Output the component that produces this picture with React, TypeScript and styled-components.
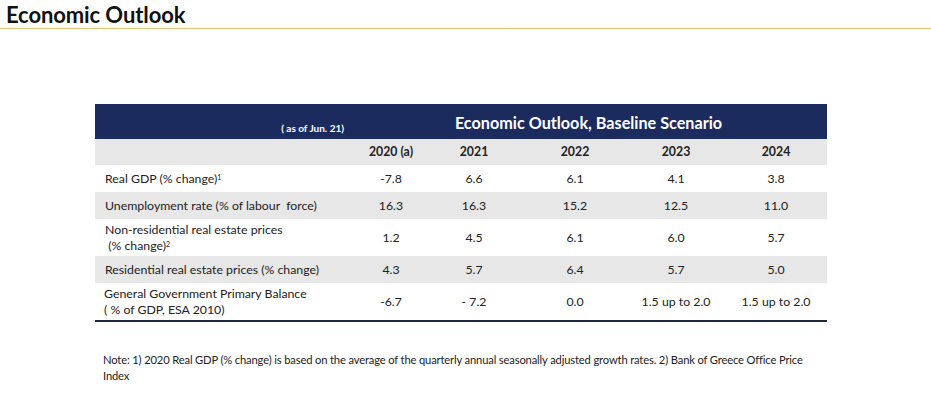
import React from "react";
import styled, { createGlobalStyle } from "styled-components";

const Global = createGlobalStyle`
  html, body { margin: 0; padding: 0; background: #ffffff; }
  body { font-family: Lato, "Open Sans", "Liberation Sans", sans-serif; color: #1f1f1f; }
`;

const Page = styled.div`
  width: 931px;
  height: 413px;
  overflow: hidden;
  background: #fff;
`;

const TitleBar = styled.header`
  height: 29px;
  border-bottom: 1.5px solid #e2c27c;
  box-sizing: border-box;
  padding: 3px 0 0 6px;
  background: linear-gradient(to bottom, #ffffff 80%, #fffbea 100%);
`;

const Title = styled.h1`
  margin: 0;
  font-size: 22px;
  font-weight: 700;
  line-height: 24px;
  color: #111;
  letter-spacing: -0.1px;
`;

const Content = styled.main`
  padding: 75px 0 0 95px;
`;

const COLS = "255px 82px 84px 118px 84px 109px";

const Table = styled.div`
  width: 732px;
  border-bottom: 2px solid #1d2940;
`;

const Band = styled.div`
  display: grid;
  grid-template-columns: 255px 1fr;
  height: 35px;
  background: #1b2b5e;
  color: #fff;
`;

const AsOf = styled.div`
  align-self: end;
  text-align: right;
  padding: 0 6px 5px 0;
  font-size: 10px;
  font-weight: 700;
`;

const BandTitle = styled.div`
  align-self: center;
  text-align: center;
  font-size: 16.2px;
  font-weight: 700;
  padding-top: 1px;
`;

const Row = styled.div<{ $shade?: boolean; $h: number }>`
  display: grid;
  grid-template-columns: ${COLS};
  align-items: center;
  height: ${(p) => p.$h}px;
  background: ${(p) => (p.$shade ? "#e7e7e8" : "#fff")};
  font-size: 12.3px;
  line-height: 15.5px;
  color: #222;
`;

const Label = styled.div<{ $indent?: number }>`
  padding-left: ${(p) => p.$indent ?? 10}px;
  white-space: pre;
`;

const Cell = styled.div<{ $shift?: number; $bold?: boolean }>`
  text-align: center;
  padding-left: ${(p) => p.$shift ?? 0}px;
  font-weight: ${(p) => (p.$bold ? 700 : 400)};
`;

const Sup = styled.sup`
  font-size: 7px;
  vertical-align: 3px;
  line-height: 0;
`;

const Note = styled.p`
  margin: 30px 0 0 8px;
  width: 718px;
  font-size: 11.2px;
  line-height: 16px;
  color: #222;
  letter-spacing: -0.15px;
`;

type R = { label: React.ReactNode; values: string[]; h: number; shade?: boolean; indent?: number };

const rows: R[] = [
  { label: <>Real GDP (% change)<Sup>1</Sup></>, values: ["-7.8", "6.6", "6.1", "4.1", "3.8"], h: 27 },
  { label: "Unemployment rate (% of labour  force)", values: ["16.3", "16.3", "15.2", "12.5", "11.0"], h: 27, shade: true },
  {
    label: <>Non-residential real estate prices<br /> (% change)<Sup>2</Sup></>,
    values: ["1.2", "4.5", "6.1", "6.0", "5.7"],
    h: 37,
  },
  { label: "Residential real estate prices (% change)", values: ["4.3", "5.7", "6.4", "5.7", "5.0"], h: 27, shade: true },
  {
    label: <>General Government Primary Balance<br />( % of GDP, ESA 2010)</>,
    values: ["-6.7", "- 7.2", "0.0", "1.5 up to 2.0", "1.5 up to 2.0"],
    h: 37,
    indent: 9,
  },
];

const years = ["2020 (a)", "2021", "2022", "2023", "2024"];

export default function App() {
  return (
    <Page>
      <Global />
      <TitleBar>
        <Title>Economic Outlook</Title>
      </TitleBar>
      <Content>
        <Table>
          <Band>
            <AsOf>( as of Jun. 21)</AsOf>
            <BandTitle>Economic Outlook, Baseline Scenario</BandTitle>
          </Band>
          <Row $shade $h={26}>
            <Label />
            {years.map((y, i) => (
              <Cell key={y} $bold $shift={i === 4 ? 7 : 0}>
                {y}
              </Cell>
            ))}
          </Row>
          {rows.map((r, ri) => (
            <Row key={ri} $shade={r.shade} $h={r.h}>
              <Label $indent={r.indent}>{r.label}</Label>
              {r.values.map((v, i) => (
                <Cell key={i} $shift={i === 4 ? 7 : 0}>
                  {v}
                </Cell>
              ))}
            </Row>
          ))}
        </Table>
        <Note>
          Note: 1) 2020 Real GDP (% change) is based on the average of the quarterly annual seasonally adjusted growth rates. 2) Bank of Greece Office Price Index
        </Note>
      </Content>
    </Page>
  );
}
